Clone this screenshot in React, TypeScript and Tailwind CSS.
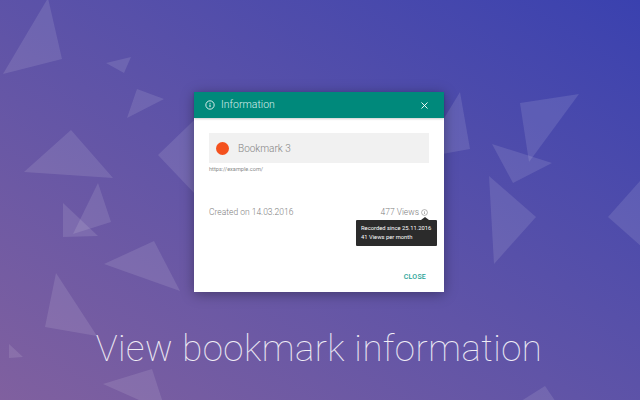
import { X } from 'lucide-react'

const triangles = [
  '48,-2 62,59 3,74',
  '106,63 131,57 124,73',
  '137,89 164,99 127,118',
  '71,130 113,178 24,172',
  '63,203 98,236 63,237',
  '98,183 111,222 73,234',
  '154,241 180,291 104,264',
  '56,273 97,336 45,327',
  '9,344 23,357 9,358',
  '152,369 166,412 103,384',
  '158,155 215,100 215,215',
  '460,92 470,149 420,158',
  '520,103 579,94 529,162',
  '492,144 552,163 513,183',
  '489,176 536,217 494,264',
  '640,181 608,217 642,247',
  '545,386 510,408 560,408',
]

const InfoIcon: React.FC<{ className?: string }> = ({ className }) => (
  <svg viewBox="0 0 24 24" fill="none" stroke="currentColor" className={className}>
    <circle cx="12" cy="12" r="10" strokeWidth="2" />
    <path d="M12 11v6M12 7v2" strokeWidth="2.4" />
  </svg>
)

const App: React.FC = () => {
  return (
    <div className="relative w-[640px] h-[400px] overflow-hidden bg-gradient-to-tr from-[#80609f] to-[#3a41af] font-['Roboto',sans-serif] antialiased">
      <svg viewBox="0 0 640 400" className="absolute inset-0 w-full h-full">
        {triangles.map(points => (
          <polygon key={points} points={points} fill="#ffffff" fillOpacity="0.11" />
        ))}
      </svg>

      <div className="relative flex flex-col items-center pt-[92px] pr-[2px]">
        <div className="flex flex-col w-[250px] h-[200px] bg-white shadow-[0_2px_12px_rgba(0,0,0,0.35)]">
          <div className="flex items-center h-[26px] pl-[11px] pr-[14px] bg-[#00897b] text-white shadow-[0_1px_2px_rgba(0,0,0,0.2)]">
            <InfoIcon className="size-[10px]" />
            <span className="ml-[6px] text-[10.5px] font-light text-[#d5eeeb]">Information</span>
            <X className="ml-auto size-[11px]" strokeWidth={2} />
          </div>

          <div className="flex flex-col flex-1 px-[15px] pt-[15px] pb-[10px]">
            <div className="flex items-center h-[30px] pl-[7px] bg-[#f1f1f1]">
              <div className="size-[13px] rounded-full bg-[#f4511e]" />
              <span className="ml-[9px] text-[10px] font-light text-[#858585]">Bookmark 3</span>
            </div>
            <p className="mt-[2px] text-[5.6px] leading-[8px] text-[#8a8a8a]">https://example.com/</p>

            <div className="relative flex items-center justify-between mt-[33px] text-[8.5px] leading-[12px] font-light text-[#808080]">
              <span>Created on 14.03.2016</span>
              <span className="flex items-center gap-[2px] mr-[1px]">
                477 Views
                <InfoIcon className="size-[7px]" />
              </span>

              <div className="absolute right-[-8px] top-[14px] w-[81px] h-[26px] pl-[5px] pt-[4px] rounded-[1px] bg-[#2b2b2b] text-[5.8px] leading-[9px] font-normal text-white">
                <div className="absolute right-[8px] top-[-3px] size-0 border-x-[4px] border-b-[3px] border-x-transparent border-b-[#2b2b2b]" />
                <p>Recorded since 25.11.2016</p>
                <p>41 Views per month</p>
              </div>
            </div>

            <div className="mt-auto pr-[3px] text-right text-[7px] font-medium tracking-[0.2px] leading-[10px] text-[#26a296]">
              CLOSE
            </div>
          </div>
        </div>

        <h1 className="mt-[32px] text-[36.5px] leading-[50px] font-thin text-white/90 tracking-[0.5px]">
          View bookmark information
        </h1>
      </div>
    </div>
  )
}

export default App
